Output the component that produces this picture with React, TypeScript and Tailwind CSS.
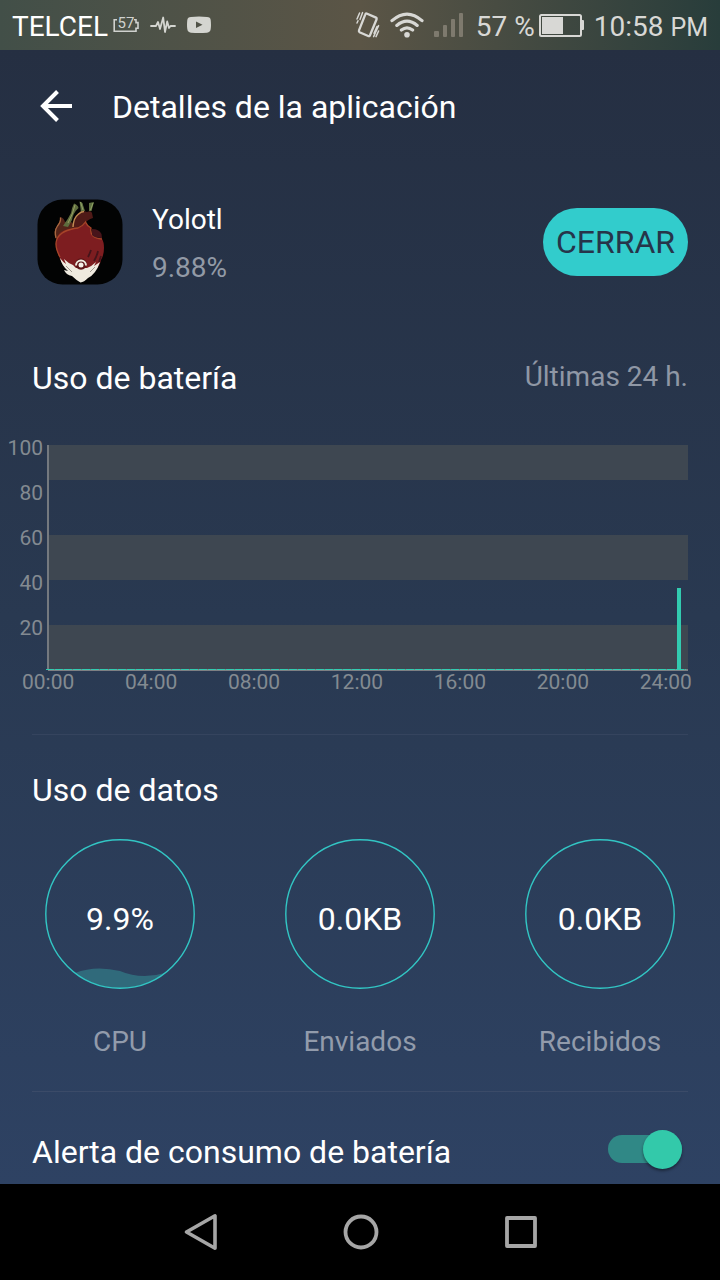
import type { ReactNode } from "react";

const yLabels = ["100", "80", "60", "40", "20"];
const xLabels = ["00:00", "04:00", "08:00", "12:00", "16:00", "20:00", "24:00"];

function SlotBadge() {
  return (
    <span className="relative flex h-5 w-[26px] items-start justify-center">
      <svg className="absolute inset-0" width="26" height="20" viewBox="0 0 26 20" fill="none" stroke="#cfd1ce" strokeWidth="1.6">
        <path d="M4 4.8H1.2V16.2H23V13.2H25V7.6H23V4.8H21" />
      </svg>
      <span className="relative text-[15px] leading-4 text-[#cfd1ce]">57</span>
    </span>
  );
}

function PulseIcon() {
  return (
    <svg width="26" height="18" viewBox="0 0 26 18" fill="none" stroke="#d4d5d0" strokeWidth="1.8" strokeLinejoin="round" strokeLinecap="round">
      <path d="M1 10H6L8 6L10 13L13.2 1.5L15 16L17.2 5.5L19 12L20.5 10H25" />
    </svg>
  );
}

function VideoIcon() {
  return (
    <svg width="24" height="18" viewBox="0 0 24 18">
      <path fillRule="evenodd" fill="#d4d5d0" d="M4 1Q12 .2 20 1Q23.5 1.2 23.7 4Q24.3 9 23.7 13Q23.4 16.4 20 16.7Q12 17.3 4 16.7Q.6 16.4.3 13Q-.3 9 .3 4Q.6 1.2 4 1ZM9 5.4V12L15.5 8.7Z" />
    </svg>
  );
}

function VibrateIcon() {
  return (
    <svg width="24" height="28" viewBox="0 0 24 28" fill="none" stroke="#d8d8d5" strokeLinecap="round">
      <path d="M10.6 2.5L20 6.6Q21 7.2 20.6 8.2L14 24.3Q13.4 25.6 12.2 25L3.6 21.2Q2.6 20.6 3 19.4L9.3 3.3Q9.7 2.2 10.6 2.5Z" strokeWidth="2.3" />
      <path d="M6.6 1.6L4 8.4M3.6 2L1 8M1 12L2 9.8M22.6 14.6L17.6 25.6M22.6 20L20 25.6M18 22.2L21 15.5" strokeWidth="1.5" />
    </svg>
  );
}

function WifiIcon() {
  return (
    <svg width="34" height="26" viewBox="0 0 34 26" fill="none" stroke="#d8d8d5" strokeWidth="3.2" strokeLinecap="round">
      <path d="M2 8.6Q17-4.4 32 8.6M6.8 13.4Q17 5 27.2 13.4M11.4 18Q17 13.6 22.6 18" />
      <circle cx="17" cy="22.8" r="2.8" fill="#d8d8d5" stroke="none" />
    </svg>
  );
}

function SignalIcon() {
  return (
    <svg width="30" height="24" viewBox="0 0 30 24" fill="#7e7a6e">
      <rect x="0" y="18" width="5" height="6" rx="1" />
      <rect x="9" y="12" width="4" height="12" rx="1" />
      <rect x="17" y="6" width="4" height="18" rx="1" />
      <rect x="25" y="0" width="4" height="24" rx="1" />
    </svg>
  );
}

function BatteryIcon() {
  return (
    <svg width="45" height="23" viewBox="0 0 45 23">
      <rect x="1" y="1" width="41" height="21" rx="1.5" fill="none" stroke="#d8d8d5" strokeWidth="2" />
      <rect x="3" y="3" width="21" height="17" fill="#d8d8d5" />
      <path d="M42 6H44Q45 6 45 7V15Q45 16 44 16H42Z" fill="#d8d8d5" />
    </svg>
  );
}

function AppIcon() {
  return (
    <svg className="shrink-0" width="86" height="86" viewBox="0 0 86 86" role="img" aria-label="Yolotl">
      <rect x=".5" y=".5" width="85" height="85" rx="25" fill="#020303" />
      <path d="M19 40Q16 32 20 27Q23 23 23.5 18Q27 19 28 23L33 21L38 28L24 34Z" fill="#532419" />
      <path d="M19 39Q17 32 20.5 27Q24 23 23.5 18.5" fill="none" stroke="#a8673f" strokeWidth="1.3" />
      <path d="M26 27Q31 20 34 14Q35 8 37 4.5Q41 6 41.5 9Q36 14 35 21L31 28Z" fill="#5d6c3d" />
      <path d="M31 24Q36 15 38 6" fill="none" stroke="#97a062" strokeWidth="1" />
      <path d="M42.5 2.5Q46 3 46 6L48 12L44 13ZM57 3L52 4L52 12L54.5 12Z" fill="#5f7242" />
      <path d="M43.5 3L46 11M56 4L53.5 11" fill="none" stroke="#91a265" strokeWidth="1" />
      <path d="M36 29Q37 19 41 15Q45 11 50 13Q54 11 55 14L56 19Q50 21 48.5 24L42 29Z" fill="#4f1a17" />
      <path d="M36 28Q36.5 19 41 15.5Q44 12.5 47 12.5" fill="none" stroke="#c08a52" strokeWidth="1.5" />
      <path d="M19 42Q20 36 24 33Q31 29 41 29Q46 27 48.5 23Q50 27 54 29Q53 38 65 40Q67 43 67 49Q67 56 64 61Q63 67 58 71L32 72Q24 65 21.5 56Q18 49 19 42Z" fill="#7d1d20" />
      <path d="M23 58Q17 47 20 40Q24 31 41 29Q46 27 48.5 23Q50 27 54 29Q52 39 65 40" fill="none" stroke="#a64528" strokeWidth="1.3" />
      <path d="M55 30Q62 30 64.5 35L65 39Q57 39 55 36Z" fill="#47141a" />
      <path d="M51 58Q53 54 54 51M57 62Q60 57 61 52M62 63L64 57" fill="none" stroke="#45141a" strokeWidth="1.8" />
      <path d="M23 59Q26 63 29 65L27 60Q31 64 36 66L39 69L50 69Q55 67 59 63L57 67L63 63Q61 69 58 73Q55 77 51 79Q47 83 43.5 83.5Q39 81 35 77Q29 76 27 71L31 72Q25 67 23 59Z" fill="#efeadf" />
      <path d="M29 67L35 73M58 68L53 73" fill="none" stroke="#8b847a" strokeWidth=".8" />
      <circle cx="44" cy="65" r="5.8" fill="#5c1517" />
      <path d="M39 66.5A5 5 0 1 1 49 66.5" fill="none" stroke="#efeadf" strokeWidth="2" />
      <circle cx="44" cy="66" r="2.5" fill="#f3f0e8" />
    </svg>
  );
}

function Gauge({ value, label, children }: { value: string; label: string; children?: ReactNode }) {
  return (
    <div className="flex flex-col items-center">
      <div className="relative flex size-[150px] items-center justify-center">
        <svg className="absolute inset-0" width="150" height="150" viewBox="0 0 150 150">
          {children}
          <circle cx="75" cy="75" r="74.2" fill="none" stroke="#32c6c4" strokeWidth="1.4" />
        </svg>
        <span className="relative pt-2.5 text-[32px] leading-10 text-white">{value}</span>
      </div>
      <span className="mt-[37px] text-[28px] leading-8 text-[#929bab]">{label}</span>
    </div>
  );
}

export default function App() {
  return (
    <div className="flex min-h-screen flex-col bg-black font-[Roboto,sans-serif]">
      <div className="flex h-[50px] items-center justify-between bg-linear-to-r from-[#424f48] via-[#5b5546] to-[#283d3b] px-3 text-[#d8d8d5]">
        <div className="flex items-center">
          <span className="pt-1 text-[28px] leading-8 text-white">TELCEL</span>
          <span className="ml-[5px] flex items-center gap-[11px]">
            <SlotBadge />
            <PulseIcon />
            <VideoIcon />
          </span>
        </div>
        <div className="flex items-center">
          <VibrateIcon />
          <span className="ml-2.5"><WifiIcon /></span>
          <span className="ml-2.5"><SignalIcon /></span>
          <span className="ml-3 pt-1 text-[28px] leading-8">57 %</span>
          <span className="ml-1"><BatteryIcon /></span>
          <span className="ml-2.5 pt-1 text-[28px] leading-8">10:58 <span className="text-[25px]">PM</span></span>
        </div>
      </div>

      <main className="flex-1 bg-linear-to-b from-[#252f42] via-[#293951] to-[#2e4263]">
        <header className="flex h-28 items-center px-10">
          <button type="button" aria-label="Atrás">
            <svg width="32" height="32" viewBox="0 0 32 32" fill="none" stroke="#fff" strokeWidth="4">
              <path d="M32 16H4M17.5 1.5L3 16L17.5 30.5" />
            </svg>
          </button>
          <h1 className="ml-10 pt-0.5 text-[32px] leading-10 text-white">Detalles de la aplicación</h1>
        </header>

        <section className="flex h-40 items-center pr-8 pl-[37px]">
          <AppIcon />
          <div className="ml-[29px] flex-1 pt-1">
            <h2 className="text-[28px] leading-[48px] text-white">Yolotl</h2>
            <p className="text-[28px] leading-[48px] text-[#929aa6]">9.88%</p>
          </div>
          <button type="button" className="h-[68px] rounded-full bg-[#32cccc] px-[13px] text-[32px] text-[#26354a]">CERRAR</button>
        </section>

        <section>
          <div className="flex h-28 items-center justify-between px-8">
            <h2 className="text-[32px] leading-10 text-white">Uso de batería</h2>
            <span className="pb-0.5 text-[28px] leading-10 text-[#8f97a5]">Últimas 24 h.</span>
          </div>
          <div className="mt-0.5 flex pr-8 text-[21px] leading-6 text-[#838a91]">
            <div className="w-[43px] shrink-0 text-right">
              {yLabels.map((label) => (
                <div key={label} className="h-[45px]">{label}</div>
              ))}
            </div>
            <div className="mt-[9px] ml-[3px] flex-1">
              <svg className="block h-[226px] w-full" viewBox="0 0 642 226" preserveAspectRatio="none" shapeRendering="crispEdges">
                <path d="M2 0H642V35H2ZM2 90H642V135H2ZM2 180H642V225H2Z" fill="#3e4751" />
                <path d="M1 0H3V225H1Z" fill="#74797f" />
                <path d="M2 224H642V226H2Z" fill="#7d7f83" />
                <path d="M0 224.5H640" stroke="#32cbb0" strokeWidth="1" strokeDasharray="8 1" />
                <path d="M631 143H635V225H631Z" fill="#32cbb0" />
              </svg>
            </div>
          </div>
          <div className="flex justify-between pr-7 pl-[22px] text-[21px] leading-[22px] text-[#838a91]">
            {xLabels.map((label) => (
              <span key={label}>{label}</span>
            ))}
          </div>
        </section>

        <hr className="mx-8 mt-[41px] border-[#35445e]" />

        <section>
          <h2 className="px-8 pt-[35px] pb-[29px] text-[32px] leading-10 text-white">Uso de datos</h2>
          <div className="grid grid-cols-3">
            <Gauge value="9.9%" label="CPU">
              <path d="M30 134Q50 126 75 132Q96 141 120 134A74 74 0 0 1 30 134Z" fill="#306a7b" />
            </Gauge>
            <Gauge value="0.0KB" label="Enviados" />
            <Gauge value="0.0KB" label="Recibidos" />
          </div>
        </section>

        <hr className="mx-8 mt-[33px] border-[#3b4b68]" />

        <section className="flex items-center justify-between px-8 pt-[38px] pb-[11px]">
          <label htmlFor="battery-alert" className="text-[32px] leading-10 text-white">Alerta de consumo de batería</label>
          <input
            id="battery-alert"
            type="checkbox"
            role="switch"
            defaultChecked
            className="relative mr-1.5 mb-1 h-[39px] w-[74px] appearance-none before:absolute before:inset-x-0 before:top-[5px] before:h-7 before:rounded-full before:bg-[#4b5a70] after:absolute after:top-0 after:left-0 after:size-[39px] after:rounded-full after:bg-[#b8c0c8] after:shadow-[0_2px_3px_rgba(0,0,0,0.4)] checked:before:bg-[#308886] checked:after:left-[35px] checked:after:bg-[#33c9aa]"
          />
        </section>
      </main>

      <nav className="flex h-24 items-center justify-center gap-[120px] bg-black">
        <button type="button" aria-label="Volver">
          <svg width="40" height="40" viewBox="0 0 40 40" fill="none" stroke="#a6a6a6" strokeWidth="3.6" strokeLinejoin="round">
            <path d="M35 3.8V36.2L6.5 20Z" />
          </svg>
        </button>
        <button type="button" aria-label="Inicio">
          <svg width="40" height="40" viewBox="0 0 40 40" fill="none" stroke="#a6a6a6" strokeWidth="3.8">
            <circle cx="21" cy="20" r="15.5" />
          </svg>
        </button>
        <button type="button" aria-label="Recientes">
          <svg width="40" height="40" viewBox="0 0 40 40" fill="none" stroke="#a6a6a6" strokeWidth="3.8" strokeLinejoin="round">
            <rect x="7" y="6" width="28" height="28" />
          </svg>
        </button>
      </nav>
    </div>
  );
}
